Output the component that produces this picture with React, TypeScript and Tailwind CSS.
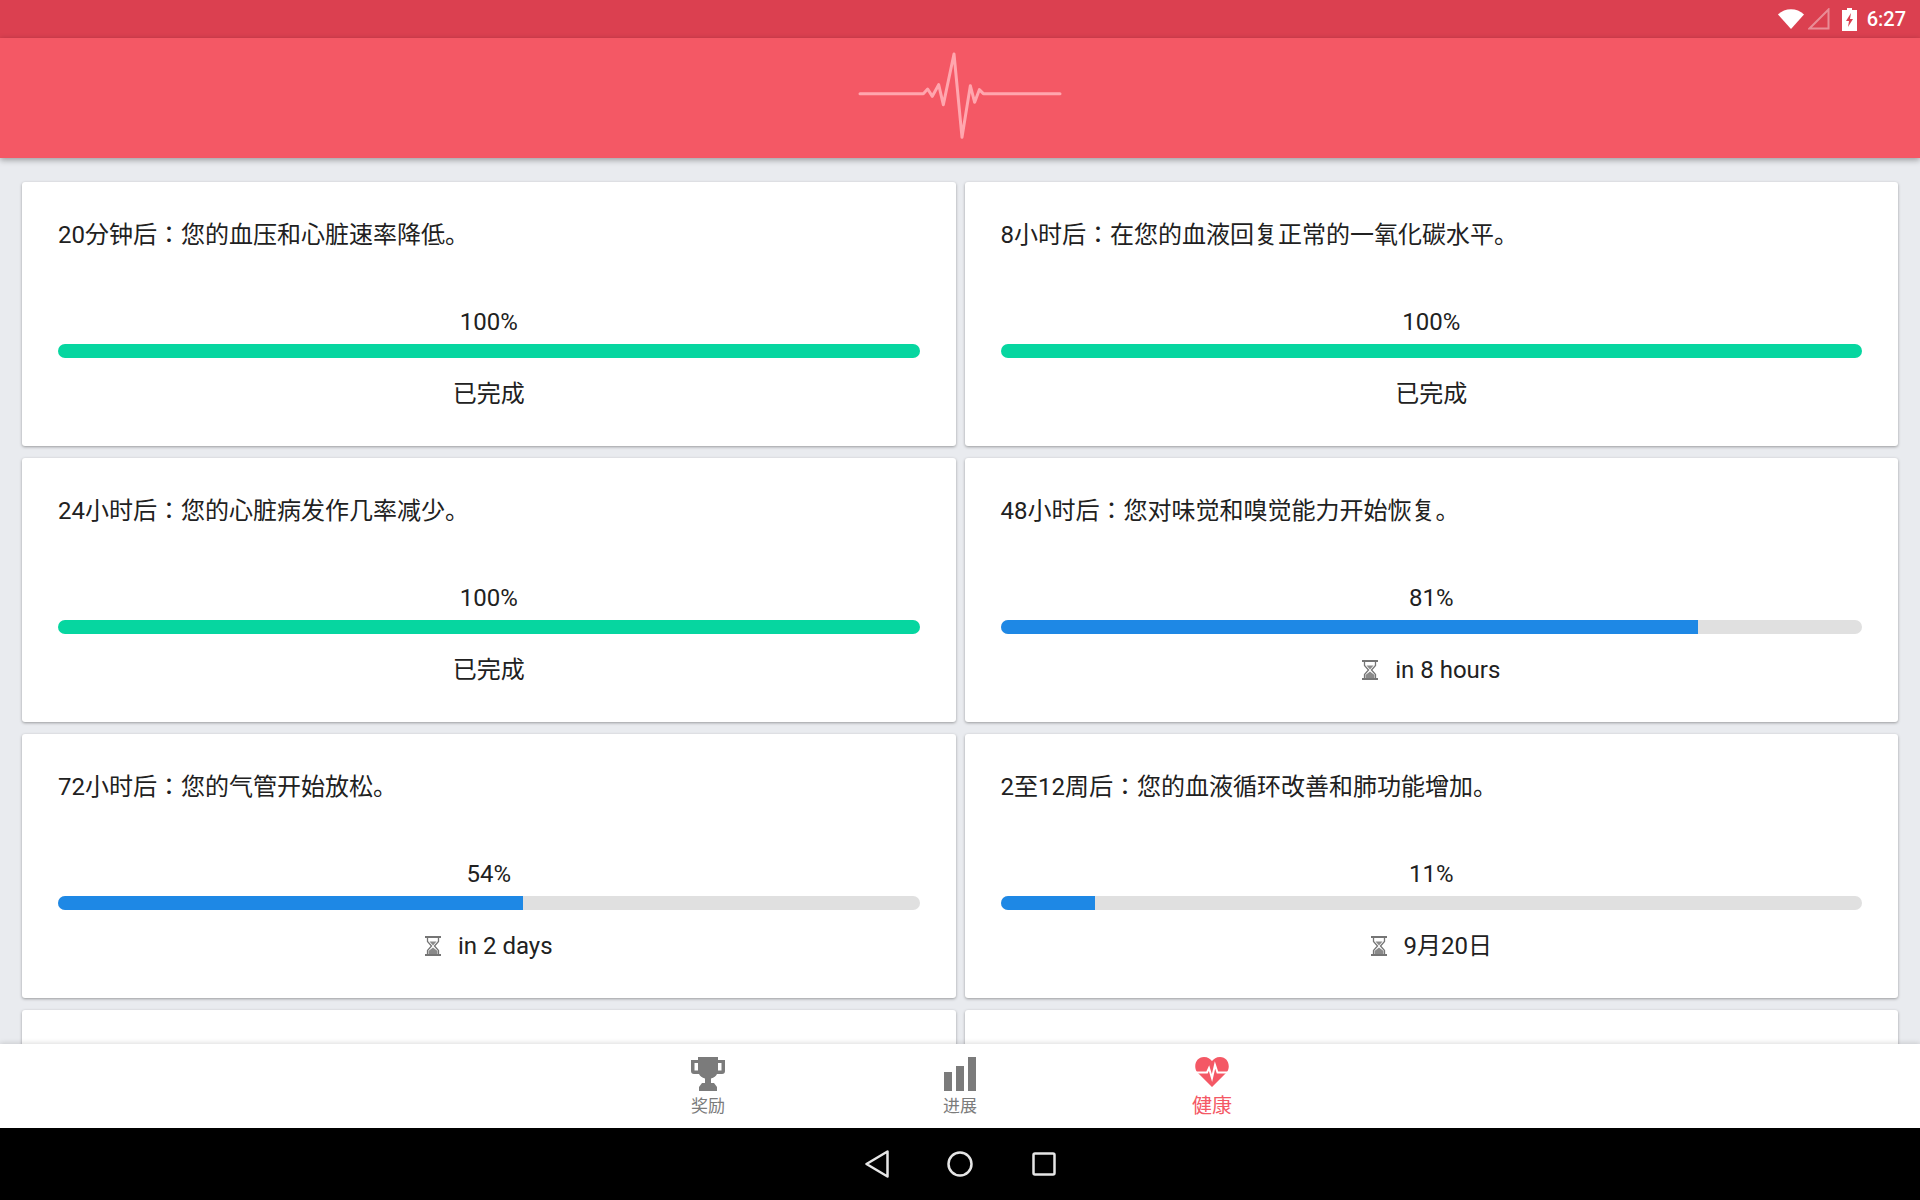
const cards = [
  { title: '20分钟后：您的血压和心脏速率降低。', pct: 100, status: '已完成' },
  { title: '8小时后：在您的血液回复正常的一氧化碳水平。', pct: 100, status: '已完成' },
  { title: '24小时后：您的心脏病发作几率减少。', pct: 100, status: '已完成' },
  { title: '48小时后：您对味觉和嗅觉能力开始恢复。', pct: 81, status: 'in 8 hours', wait: true },
  { title: '72小时后：您的气管开始放松。', pct: 54, status: 'in 2 days', wait: true },
  { title: '2至12周后：您的血液循环改善和肺功能增加。', pct: 11, status: '9月20日', wait: true },
];

function Hourglass() {
  return (
    <svg width="16" height="20" viewBox="0 0 16 20" className="shrink-0">
      <path d="M0 0h16v2H0zM0 18h16v2H0z" fill="#757575" />
      <path d="M2.5 2v3.5L6.5 10l-4 4.500V18" fill="none" stroke="#757575" strokeWidth="1.300" />
      <path d="M13.500 2v3.500L9.500 10l4 4.500V18" fill="none" stroke="#757575" strokeWidth="1.300" />
      <path d="M4.500 5.500h7L8 9.500zM3.500 18v-3L8 11.500l4.500 3.500v3z" fill="#8a8a8a" />
    </svg>
  );
}

function Card({ title, pct, status, wait }: { title: string; pct: number; status: string; wait?: boolean }) {
  const done = pct === 100;
  return (
    <div className="h-[264px] rounded-[3px] bg-white px-[36px] pt-[36px] shadow-[0_1px_3px_rgba(0,0,0,0.35)]">
      <div className="text-[24px] leading-[34px]">{title}</div>
      <div className="mt-[53px] text-center text-[24px] leading-[34px]">{pct}%</div>
      <div className="mt-[5px] h-[14px] overflow-hidden rounded-full bg-[#e0e0e0]">
        <div className={done ? 'h-full bg-[#06d6a0]' : 'h-full bg-[#1e88e5]'} style={{ width: `${pct}%` }} />
      </div>
      <div className="mt-[18px] flex items-center justify-center gap-[17px] text-[24px] leading-[36px]">
        {wait && <Hourglass />}
        <span>{status}</span>
      </div>
    </div>
  );
}

export default function App() {
  return (
    <div
      lang="ja"
      className="flex h-[1200px] w-[1920px] flex-col overflow-hidden bg-[#e9ebef] font-['Roboto','Noto_Sans_CJK_JP',sans-serif] text-[#212121]"
    >
      <div className="flex h-[38px] shrink-0 items-center justify-end bg-[#db4050] pr-[14px] text-white">
        <svg width="28" height="22" viewBox="0 0 28 22" className="mr-[3px]">
          <path d="M1 6.500C8-0.500 20-0.500 27 6.500L14 21z" fill="#fff" />
        </svg>
        <svg width="22" height="22" viewBox="0 0 22 22" className="mr-[12px]">
          <path d="M20.500 1.500V20.500H1.500z" fill="none" stroke="#fff" strokeOpacity="0.4" strokeWidth="2" />
        </svg>
        <svg width="15" height="23" viewBox="0 0 15 23" className="mr-[10px]">
          <path d="M5 0h5v2h5v21H0V2h5z" fill="#fff" />
          <path d="M9 5L4 13h3l-1 6 5-8H8z" fill="#db4050" />
        </svg>
        <span className="text-[20px] font-medium">6:27</span>
      </div>

      <div className="relative z-10 flex h-[120px] shrink-0 items-center justify-center bg-[#f45865] shadow-[0_2px_6px_rgba(0,0,0,0.35)]">
        <svg width="240" height="120" viewBox="0 0 720 360">
          <path
            d="M60 167H250L263 153L277 175L296 140L310 200L342 48L366 298L391 143L404 193L418 155L430 167H660"
            fill="none"
            stroke="#ffa6ae"
            strokeWidth="9"
            strokeLinecap="round"
            strokeLinejoin="round"
          />
        </svg>
      </div>

      <div className="min-h-0 flex-1 overflow-hidden px-[22px] pt-[24px]">
        <div className="grid grid-cols-2 gap-x-[9px] gap-y-[12px]">
          {cards.map((c) => (
            <Card key={c.title} {...c} />
          ))}
          <div className="h-[264px] rounded-[3px] bg-white shadow-[0_1px_3px_rgba(0,0,0,0.35)]" />
          <div className="h-[264px] rounded-[3px] bg-white shadow-[0_1px_3px_rgba(0,0,0,0.35)]" />
        </div>
      </div>

      <div className="relative z-10 flex h-[84px] shrink-0 justify-center bg-white pt-[13px] shadow-[0_-1px_5px_rgba(0,0,0,0.14)]">
        <div className="flex w-[252px] flex-col items-center text-[#7b7b7b]">
          <svg width="34" height="34" viewBox="0 0 34 34">
            <path
              d="M7 0h20v3h7v11c0 2-1 3-3 3h-5c-1 2-3 4-6 4.500V26h3l3 4v4H8v-4l3-4h3v-4.500C11 21 9 19 8 17H3c-2 0-3-1-3-3V3h7zM3.500 6v7.500H7V6zM27 6v7.500h3.500V6z"
              fill="#7b7b7b"
              fillRule="evenodd"
            />
          </svg>
          <span className="mt-[2px] text-[17px] leading-[26px]">奖励</span>
        </div>
        <div className="flex w-[252px] flex-col items-center text-[#7b7b7b]">
          <svg width="34" height="34" viewBox="0 0 34 34">
            <path d="M1 15h8v19H1zM13 9h8v25h-8zM25 0h8v34h-8z" fill="#7b7b7b" />
          </svg>
          <span className="mt-[2px] text-[17px] leading-[26px]">进展</span>
        </div>
        <div className="flex w-[252px] flex-col items-center text-[#f45865]">
          <svg width="34" height="34" viewBox="0 0 34 34">
            <path d="M17 30L2 15C-2 9 1 0 9 0c4 0 6 2 8 4 2-2 4-4 8-4 8 0 11 9 7 15z" fill="#f45865" />
            <path d="M0 15.500H12L14 11l3 10 3-13 2.500 7.500H34" fill="none" stroke="#fff" strokeWidth="2" />
          </svg>
          <span className="mt-[2px] text-[20px] leading-[26px]">健康</span>
        </div>
      </div>

      <div className="flex h-[72px] shrink-0 items-center justify-center bg-black">
        <div className="flex w-[191px] items-center justify-between">
          <svg width="24" height="28" viewBox="0 0 24 28">
            <path d="M22.500 1.500V26.500L1.500 14z" fill="none" stroke="#e6e6e6" strokeWidth="2.500" strokeLinejoin="round" />
          </svg>
          <svg width="26" height="26" viewBox="0 0 26 26">
            <circle cx="13" cy="13" r="11.500" fill="none" stroke="#e6e6e6" strokeWidth="2.500" />
          </svg>
          <svg width="24" height="24" viewBox="0 0 24 24">
            <rect x="1.500" y="1.500" width="21" height="21" rx="1.500" fill="none" stroke="#e6e6e6" strokeWidth="2.500" />
          </svg>
        </div>
      </div>
    </div>
  );
}
